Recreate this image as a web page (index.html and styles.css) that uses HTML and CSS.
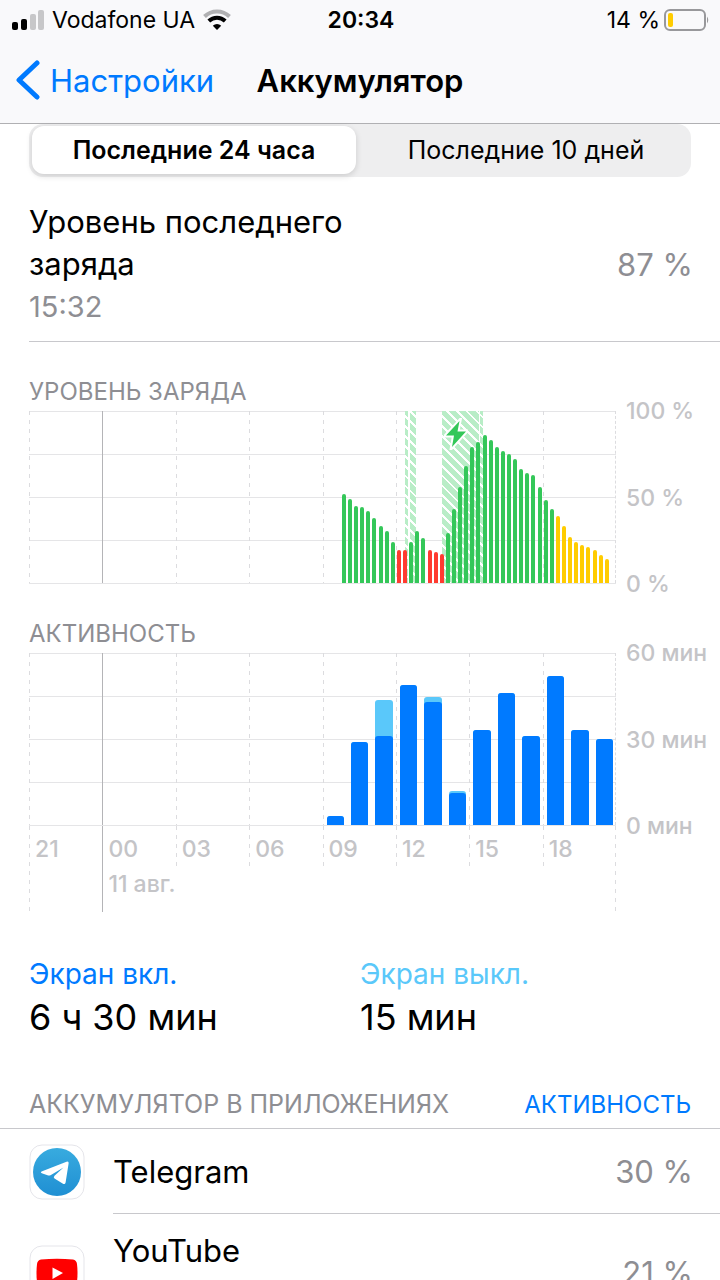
FILE: index.html
```html
<!DOCTYPE html>
<html lang="ru">
<head>
    <meta charset="UTF-8">
    <meta name="viewport" content="width=device-width, initial-scale=1.0">
    <title>Аккумулятор</title>
    <link rel="stylesheet" href="styles.css">
</head>
<body>
    <header class="top">
        <div class="status-bar">
            <div class="carrier">
                <svg class="signal" viewBox="0 0 32 20" aria-hidden="true">
                    <rect x="0" y="12" width="6" height="8" rx="2"/>
                    <rect x="9" y="9" width="6" height="11" rx="2"/>
                    <rect class="off" x="18" y="4" width="6" height="16" rx="2"/>
                    <rect class="off" x="26" y="0" width="6" height="20" rx="2"/>
                </svg>
                <span>Vodafone UA</span>
                <svg class="wifi" viewBox="0 0 28 21" aria-hidden="true">
                    <path class="far" d="M1.500 7.500A18 18 0 0 1 26.500 7.500"/>
                    <path d="M5.800 12A12 12 0 0 1 22.200 12"/>
                    <path class="dot" d="M14 21L9.800 16.800A6 6 0 0 1 18.200 16.800Z"/>
                </svg>
            </div>
            <time class="clock">20:34</time>
            <div class="battery">
                <span>14 %</span>
                <svg class="battery-icon" viewBox="0 0 46 22" aria-hidden="true">
                    <rect class="shell" x="1" y="1" width="40" height="20" rx="5"/>
                    <rect class="charge" x="4" y="4" width="5" height="14" rx="2"/>
                    <path class="cap" d="M43 7.500Q45.500 11 43 14.500Z"/>
                </svg>
            </div>
        </div>
        <nav class="nav-bar">
            <a class="back" href="#">
                <svg viewBox="0 0 24 40" aria-hidden="true"><path d="M21 3L3 20L21 37"/></svg>
                <span>Настройки</span>
            </a>
            <h1>Аккумулятор</h1>
        </nav>
    </header>

    <main>
        <div class="segmented">
            <button class="segment active" type="button">Последние 24 часа</button>
            <button class="segment" type="button">Последние 10 дней</button>
        </div>

        <section class="last-charge">
            <div class="last-charge-text">
                <p>Уровень последнего заряда</p>
                <time>15:32</time>
            </div>
            <span class="value">87 %</span>
        </section>

        <section class="chart-block">
            <h2>УРОВЕНЬ ЗАРЯДА</h2>
            <div class="chart">
                <div class="plot">
                    <div class="columns"><i></i><i class="midnight"></i><i></i><i></i><i></i><i></i><i></i><i></i></div>
                    <div class="charging short"></div>
                    <div class="charging long">
                        <svg viewBox="0 0 24 32" aria-hidden="true"><path d="M15.500 3L2 17.500H10L8 29L22 13.500H13.500Z"/></svg>
                    </div>
                    <div class="bars level" id="levelBars"></div>
                </div>
                <div class="scale"><span>100 %</span><span>50 %</span><span>0 %</span></div>
            </div>
        </section>

        <section class="chart-block">
            <h2>АКТИВНОСТЬ</h2>
            <div class="chart">
                <div class="plot">
                    <div class="columns"><i></i><i class="midnight"></i><i></i><i></i><i></i><i></i><i></i><i></i></div>
                    <div class="bars activity" id="activityBars"></div>
                </div>
                <div class="scale"><span>60 мин</span><span>30 мин</span><span>0 мин</span></div>
            </div>
            <div class="hours">
                <span class="edge">21</span>
                <span class="midnight">00<br>11 авг.</span>
                <span>03</span>
                <span>06</span>
                <span>09</span>
                <span>12</span>
                <span>15</span>
                <span>18</span>
            </div>
        </section>

        <section class="screen-time">
            <div>
                <h3 class="on">Экран вкл.</h3>
                <p>6 ч 30 мин</p>
            </div>
            <div>
                <h3 class="off">Экран выкл.</h3>
                <p>15 мин</p>
            </div>
        </section>

        <section class="apps">
            <div class="apps-header">
                <h2>АККУМУЛЯТОР В ПРИЛОЖЕНИЯХ</h2>
                <button type="button">АКТИВНОСТЬ</button>
            </div>
            <ul>
                <li>
                    <svg class="app-icon" viewBox="0 0 56 56" aria-hidden="true">
                        <defs>
                            <linearGradient id="sky" x1="0" y1="0" x2="0" y2="1">
                                <stop offset="0" stop-color="#38abdf"/>
                                <stop offset="1" stop-color="#1f8fd3"/>
                            </linearGradient>
                        </defs>
                        <rect class="tile" x="1" y="1" width="54" height="54" rx="12"/>
                        <circle cx="28" cy="28" r="24" fill="url(#sky)"/>
                        <path fill="#fff" d="M12.500 27.500L37.500 17.800Q40 17 39.600 19.600L36.600 38.500Q36 41 33.600 39.500L25.500 34.500Q24 33.200 25.500 31.800L34.500 23.500L21.500 31.200Q20 31.800 18.500 31.200L12.800 29.300Q11 28.400 12.500 27.500Z"/>
                    </svg>
                    <div class="app-row">
                        <span class="app-name">Telegram</span>
                        <span class="value">30 %</span>
                    </div>
                </li>
                <li class="tall">
                    <svg class="app-icon" viewBox="0 0 56 56" aria-hidden="true">
                        <rect class="tile" x="1" y="1" width="54" height="54" rx="12"/>
                        <path fill="#f00" d="M12 14.500Q28 13 44 14.500Q47.500 15 48 19Q49 28 48 37Q47.500 41 44 41.500Q28 43 12 41.500Q8.500 41 8 37Q7 28 8 19Q8.500 15 12 14.500Z"/>
                        <path fill="#fff" d="M23.500 22.500L34 28L23.500 34Z"/>
                    </svg>
                    <div class="app-row">
                        <span class="app-name">YouTube</span>
                        <span class="value">21 %</span>
                    </div>
                </li>
            </ul>
        </section>
    </main>

    <script>
        // battery level every 15 minutes, starting from slot 51 of 96
        const firstLevelSlot = 51;
        const levels = [
            52, 49, 45, 44, 42, 38, 33, 30, 24, 19, 19, 24, 30, 26, 19, 18, 17,
            29, 43, 56, 68, 79, 82, 86, 83, 79, 77, 75, 72, 66, 64, 63, 56, 48, 43,
            39, 33, 27, 24, 22, 21, 19, 16, 14
        ];
        const lowPowerFrom = 35;

        // minutes per hour: [screen on, total]
        const firstHour = 12;
        const activity = [
            [3, 3], [29, 29], [31, 43.5], [49, 49], [43, 44.5], [11, 12],
            [33, 33], [46, 46], [31, 31], [52, 52], [33, 33], [30, 30]
        ];

        const levelBars = document.getElementById('levelBars');
        levels.forEach((level, i) => {
            let color = level < 20 ? 'red' : 'green';
            if (i >= lowPowerFrom) {
                color = 'yellow';
            }
            levelBars.innerHTML += `<div class="bar ${color}" style="grid-column: ${firstLevelSlot + i + 1}; height: ${level}%"></div>`;
        });

        const activityBars = document.getElementById('activityBars');
        activity.forEach(([on, total], i) => {
            activityBars.innerHTML += `<div class="bar" style="grid-column: ${firstHour + i + 1}; height: ${total / 60 * 100}%"><div style="height: ${on / total * 100}%"></div></div>`;
        });
    </script>
</body>
</html>
```
FILE: styles.css
```css
* {
    box-sizing: border-box;
}
html {
    overflow: hidden;
}
body {
    margin: 0;
    background-color: #fff;
    color: #000;
    font-family: Inter, "Liberation Sans", sans-serif;
    height: 100vh;
    overflow: hidden;
}
h1, h2, h3, p, ul {
    margin: 0;
    padding: 0;
    font-weight: 400;
}
button {
    border: none;
    padding: 0;
    background: none;
    color: inherit;
    font-family: inherit;
    cursor: pointer;
}

/* header */
.top {
    background-color: #f9f9fb;
    border-bottom: 1px solid #b0b0b3;
}
.status-bar {
    display: grid;
    grid-template-columns: 1fr auto 1fr;
    align-items: center;
    height: 39px;
    padding: 0 10px 0 12px;
    font-size: 23px;
}
.carrier {
    display: flex;
    align-items: center;
    gap: 8px;
}
.signal {
    width: 32px;
    height: 20px;
}
.signal .off {
    fill: #c7c7c9;
}
.wifi {
    width: 28px;
    height: 21px;
    fill: none;
    stroke: #000;
    stroke-width: 4;
}
.wifi .far {
    stroke: #b0b0b2;
}
.wifi .dot {
    fill: #000;
    stroke: none;
}
.clock {
    font-weight: 600;
}
.battery {
    display: flex;
    align-items: center;
    justify-content: flex-end;
    gap: 4px;
}
.battery-icon {
    width: 46px;
    height: 22px;
}
.battery-icon .shell {
    fill: none;
    stroke: #98989b;
    stroke-width: 2;
}
.battery-icon .charge {
    fill: #ffcc00;
}
.battery-icon .cap {
    fill: #98989b;
}
.nav-bar {
    display: grid;
    grid-template-columns: 1fr auto 1fr;
    align-items: center;
    height: 84px;
    padding: 0 16px 2px;
}
.back {
    display: flex;
    align-items: center;
    gap: 10px;
    color: #007aff;
    font-size: 31px;
    text-decoration: none;
}
.back svg {
    width: 24px;
    height: 40px;
    fill: none;
    stroke: #007aff;
    stroke-width: 5;
    stroke-linecap: round;
    stroke-linejoin: round;
}
.nav-bar h1 {
    font-size: 31px;
    font-weight: 600;
}

/* period switch, tucked under the header */
.segmented {
    display: flex;
    gap: 8px;
    margin: 0 29px;
    padding: 2px 3px 3px;
    border-radius: 14px;
    background-color: #eeeeef;
}
.segment {
    flex: 1;
    height: 48px;
    border-radius: 12px;
    font-size: 25px;
}
.segment.active {
    background-color: #fff;
    box-shadow: 0 2px 6px rgba(0, 0, 0, 0.15);
    font-weight: 600;
}

.value {
    color: #8e8e93;
    font-size: 31px;
}
.last-charge {
    display: flex;
    align-items: center;
    justify-content: space-between;
    height: 165px;
    margin-left: 29px;
    padding: 11px 27px 0 0;
    border-bottom: 1px solid #c8c8cc;
}
.last-charge-text {
    width: 360px;
}
.last-charge p {
    font-size: 31px;
    line-height: 42px;
}
.last-charge time {
    display: block;
    color: #8e8e93;
    font-size: 29px;
    line-height: 44px;
}

/* charts */
.chart-block {
    padding-left: 29px;
}
.chart-block h2 {
    height: 69px;
    padding-top: 34px;
    color: #8e8e93;
    font-size: 24px;
    line-height: 32px;
}
.chart {
    display: flex;
}
.plot {
    position: relative;
    flex: 1;
    height: 173px;
    border-bottom: 1px solid #e5e5e7;
    background-image: linear-gradient(#e5e5e7 1px, transparent 1px);
    background-size: 100% 43px;
    background-clip: padding-box;
}
.columns,
.bars {
    position: absolute;
    inset: 0;
    display: grid;
}
.columns {
    grid-template-columns: repeat(8, 1fr);
}
.columns i,
.hours span {
    background: repeating-linear-gradient(#dcdcdf 0 4px, transparent 4px 9px) left top / 1px 100% no-repeat;
}
.columns i:last-child {
    border-right: 1px dashed #dcdcdf;
}
.columns .midnight,
.hours .midnight {
    background: linear-gradient(#b4b4b7, #b4b4b7) left top / 1px 100% no-repeat;
}
.bars {
    align-items: end;
}
.level {
    grid-template-columns: repeat(96, 1fr);
}
.level .bar {
    width: 4px;
    justify-self: center;
    border-radius: 2px 2px 0 0;
}
.green {
    background-color: #34c759;
}
.red {
    background-color: #ff3b30;
}
.yellow {
    background-color: #ffcc00;
}
.activity {
    grid-template-columns: repeat(24, 1fr);
}
.activity .bar {
    display: flex;
    align-items: flex-end;
    margin: 0 3px 0 4px;
    border-radius: 3px 3px 0 0;
    background-color: #5ac8fa;
}
.activity .bar div {
    width: 100%;
    border-radius: 3px 3px 0 0;
    background-color: #007aff;
}
.charging {
    position: absolute;
    top: 0;
    bottom: 0;
    background: repeating-linear-gradient(45deg, #b9edc7 0 5px, #fff 5px 7px);
}
.charging.short {
    left: 64%;
    width: 2%;
}
.charging.long {
    left: 70.4%;
    width: 7%;
}
.charging::before {
    content: "";
    position: absolute;
    top: 0;
    bottom: 0;
    left: 3px;
    width: 2px;
    background-color: #fff;
}
.charging.long::before {
    left: auto;
    right: 3px;
    width: 1px;
}
.charging svg {
    position: absolute;
    top: 7px;
    left: 2px;
    width: 24px;
    height: 32px;
    fill: #34c759;
    stroke: #fff;
    stroke-width: 4;
    paint-order: stroke;
}
.scale {
    display: flex;
    flex-direction: column;
    justify-content: space-between;
    width: 104px;
    margin: -15px 0;
    padding-left: 10px;
    color: #c4c4c7;
    font-size: 23px;
    font-weight: 500;
    line-height: 30px;
}
.hours {
    display: grid;
    grid-template-columns: repeat(8, 1fr);
    align-items: start;
    margin-right: 104px;
    color: #c4c4c7;
    font-size: 23px;
    font-weight: 500;
    line-height: 35px;
    background: repeating-linear-gradient(#dcdcdf 0 4px, transparent 4px 9px) right top / 1px 100% no-repeat;
}
.hours span {
    height: 43px;
    padding: 6px 0 0 6px;
    white-space: nowrap;
}
.hours .edge,
.hours .midnight {
    height: 86px;
}

/* totals */
.screen-time {
    display: grid;
    grid-template-columns: 1fr 1fr;
    padding: 42px 29px 0;
}
.screen-time h3 {
    font-size: 28px;
    line-height: 40px;
}
.screen-time p {
    font-size: 36px;
    line-height: 46px;
}
.screen-time .on {
    color: #007aff;
}
.screen-time .off {
    color: #5ac8fa;
}

/* app list */
.apps-header {
    display: flex;
    align-items: center;
    justify-content: space-between;
    height: 89px;
    padding: 40px 29px 0;
    border-bottom: 1px solid #c8c8cc;
}
.apps-header h2 {
    color: #8e8e93;
    font-size: 25px;
}
.apps-header button {
    color: #007aff;
    font-size: 24px;
}
.apps ul {
    list-style: none;
}
.apps li {
    display: flex;
    align-items: center;
    gap: 28px;
    padding-left: 29px;
}
.app-icon {
    width: 56px;
    height: 56px;
}
.app-icon .tile {
    fill: #fff;
    stroke: #e5e5ea;
}
.app-row {
    display: flex;
    flex: 1;
    align-items: center;
    justify-content: space-between;
    height: 85px;
    padding-right: 27px;
    border-bottom: 1px solid #c8c8cc;
}
.app-name {
    font-size: 31px;
}
.tall .app-row {
    height: 117px;
}
.tall .app-name {
    align-self: flex-start;
    padding-top: 18px;
}
```
